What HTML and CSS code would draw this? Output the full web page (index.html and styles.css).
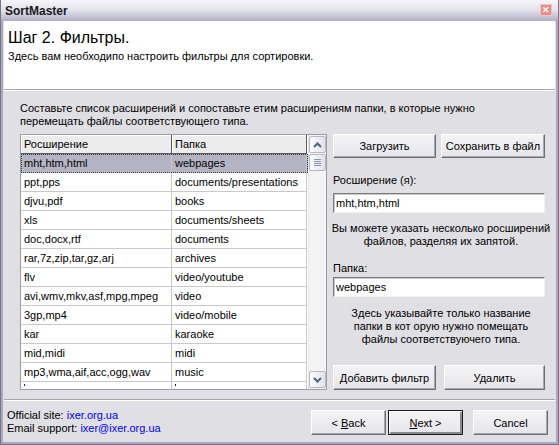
FILE: index.html
```html
<!DOCTYPE html>
<html lang="ru">

<head>
    <meta charset="UTF-8" />
    <title>SortMaster</title>
    <link rel="stylesheet" href="styles.css">
</head>

<body>
    <div class="window">
        <div class="titlebar">
            <span class="title">SortMaster</span>
            <span class="close">&#x2715;</span>
        </div>

        <div class="header">
            <h1>Шаг 2. Фильтры.</h1>
            <p>Здесь вам необходипо настроить фильтры для сортировки.</p>
        </div>

        <div class="content">
            <p class="hint">Составьте список расширений и сопоставьте етим расширениям папки, в которые нужно<br>перемещать файлы соответствующего типа.</p>

            <div class="main">
                <div class="list">
                    <div class="rows">
                        <div class="row head"><span>Росширение</span><span>Папка</span></div>
                        <div class="row selected"><span>mht,htm,html</span><span>webpages</span></div>
                        <div class="row"><span>ppt,pps</span><span>documents/presentations</span></div>
                        <div class="row"><span>djvu,pdf</span><span>books</span></div>
                        <div class="row"><span>xls</span><span>documents/sheets</span></div>
                        <div class="row"><span>doc,docx,rtf</span><span>documents</span></div>
                        <div class="row"><span>rar,7z,zip,tar,gz,arj</span><span>archives</span></div>
                        <div class="row"><span>flv</span><span>video/youtube</span></div>
                        <div class="row"><span>avi,wmv,mkv,asf,mpg,mpeg</span><span>video</span></div>
                        <div class="row"><span>3gp,mp4</span><span>video/mobile</span></div>
                        <div class="row"><span>kar</span><span>karaoke</span></div>
                        <div class="row"><span>mid,midi</span><span>midi</span></div>
                        <div class="row"><span>mp3,wma,aif,acc,ogg,wav</span><span>music</span></div>
                        <div class="row cut"><span></span><span></span></div>
                    </div>
                    <div class="scroll">
                        <div class="arrow">
                            <svg width="9" height="6" viewBox="0 0 9 6"><path d="M1 5 L4.5 1.5 L8 5" fill="none" stroke="#4d6185" stroke-width="2"/></svg>
                        </div>
                        <div class="thumb"><i></i><i></i><i></i><i></i></div>
                        <div class="track"></div>
                        <div class="arrow">
                            <svg width="9" height="6" viewBox="0 0 9 6"><path d="M1 1 L4.5 4.5 L8 1" fill="none" stroke="#4d6185" stroke-width="2"/></svg>
                        </div>
                    </div>
                </div>

                <div class="side">
                    <div class="btn-row">
                        <button class="btn">Загрузить</button>
                        <button class="btn wide">Сохранить в файл</button>
                    </div>

                    <label class="field-label">Росширение (я):</label>
                    <div class="field">mht,htm,html</div>
                    <p class="note">Вы можете указать несколько росширений<br>файлов, разделяя их запятой.</p>

                    <label class="field-label folder">Папка:</label>
                    <div class="field folder-field">webpages</div>
                    <p class="note folder-note">Здесь указывайте только название<br>папки в кот орую нужно помещать<br>файлы соответствуючего типа.</p>

                    <div class="btn-row bottom">
                        <button class="btn">Добавить фильтр</button>
                        <button class="btn">Удалить</button>
                    </div>
                </div>
            </div>
        </div>

        <div class="footer">
            <div class="links">
                <div>Official site: <a href="#">ixer.org.ua</a></div>
                <div>Email support: <a href="#">ixer@ixer.org.ua</a></div>
            </div>
            <div class="nav">
                <button class="btn">&lt; <u>B</u>ack</button>
                <button class="btn default"><u>N</u>ext &gt;</button>
                <button class="btn cancel">Cancel</button>
            </div>
        </div>
    </div>
</body>

</html>
```

FILE: styles.css
```css
* {
    margin: 0;
    padding: 0;
    box-sizing: border-box;
}

body {
    width: 559px;
    height: 445px;
    overflow: hidden;
    font-family: "Liberation Sans", Arial, sans-serif;
    font-size: 11px;
    color: #000;
}

.window {
    width: 559px;
    height: 445px;
    display: flex;
    flex-direction: column;
    background: #e0dfe3;
    border: 1px solid #76758f;
    border-top: none;
    box-shadow: inset 2px 0 #a9a8bf, inset -2px 0 #a9a8bf, inset 0 -2px #a9a8bf;
    padding: 0 3px 3px 3px;
}

.window > div {
    flex-shrink: 0;
}

.titlebar {
    height: 21px;
    margin: 0 -3px;
    display: flex;
    align-items: center;
    justify-content: space-between;
    padding: 0 6px 0 4px;
    background: linear-gradient(#f6f6f9, #e4e4ec 45%, #c5c4d6 80%, #aeadc3);
}

.title {
    font-weight: bold;
    font-size: 12px;
    color: #1a1a1a;
}

.close {
    width: 12px;
    height: 12px;
    margin-top: -1px;
    background: #e98e86;
    border: 1px solid #f2c4bd;
    color: #fff;
    font-size: 9px;
    font-weight: bold;
    line-height: 10px;
    text-align: center;
}

.header {
    height: 69px;
    background: #fff;
    border-bottom: 1px solid #a7a6aa;
    box-shadow: 0 1px #fff;
    padding: 7px 4px;
}

.header h1 {
    font-weight: normal;
    font-size: 16px;
    line-height: 19px;
}

.header p {
    margin-top: 3px;
    line-height: 13px;
}

.content {
    flex: 1;
    flex-shrink: 1;
    overflow: hidden;
    padding: 12px 0 0 16px;
    border-bottom: 1px solid #a7a6aa;
}

.hint {
    line-height: 13px;
}

.main {
    display: flex;
    gap: 6px;
    margin-top: 6px;
}

.list {
    width: 307px;
    height: 256px;
    display: flex;
    background: #fff;
    border: 1px solid #9c9ca6;
    overflow: hidden;
}

.rows {
    width: 287px;
    overflow: hidden;
}

.row {
    display: grid;
    grid-template-columns: 151px 135px;
    height: 19px;
}

.row span {
    padding: 0 3px;
    line-height: 18px;
    white-space: nowrap;
    overflow: hidden;
    border-right: 1px solid #c9c9c9;
    border-bottom: 1px solid #c9c9c9;
}

.row.head span {
    background: #ececec;
    border-right: 1px solid #5c5c5c;
    border-bottom: 1px solid #5c5c5c;
    box-shadow: inset 1px 1px #fff;
}

.row.selected {
    background: #b5b4c4;
    outline: 1px dotted #333;
    outline-offset: -1px;
}

.row.cut span::before {
    content: "";
    display: block;
    width: 1px;
    height: 2px;
    margin-top: 2px;
    background: #222;
}

.scroll {
    width: 18px;
    display: flex;
    flex-direction: column;
    background: #f4f4f6;
    border-left: 1px solid #e6e6ea;
    padding: 1px 0;
}

.arrow,
.thumb {
    height: 17px;
    display: flex;
    align-items: center;
    justify-content: center;
    background: linear-gradient(90deg, #fbfbfc, #e2e2ea);
    border: 1px solid #b8b7c8;
    border-radius: 2px;
}

.thumb {
    flex-direction: column;
    gap: 1px;
    margin-top: 1px;
}

.thumb i {
    display: block;
    width: 7px;
    height: 1px;
    background: #9291a8;
}

.track {
    flex: 1;
}

.side {
    width: 212px;
    display: flex;
    flex-direction: column;
}

.btn-row {
    display: flex;
    justify-content: space-between;
}

.btn {
    font-family: inherit;
    font-size: 11px;
    width: 103px;
    height: 24px;
    background: linear-gradient(#f4f4f6, #e6e5ea);
    border: 1px solid;
    border-color: #fff #6d6d72 #6d6d72 #fff;
    box-shadow: inset -1px -1px #a9a8b0;
    color: #000;
}

.btn.wide {
    width: 104px;
}

.field-label {
    display: block;
    margin-top: 16px;
    line-height: 13px;
}

.field-label.folder {
    margin-top: 14px;
}

.field {
    margin-top: 6px;
    height: 20px;
    line-height: 18px;
    padding: 0 2px;
    background: #fff;
    border: 1px solid;
    border-color: #7a7a80 #f0f0f2 #f0f0f2 #7a7a80;
    box-shadow: inset 1px 1px #c8c8cc;
}

.field.folder-field {
    margin-top: 2px;
}

.note {
    margin: 9px -8px 0 -4px;
    text-align: center;
    line-height: 13px;
    white-space: nowrap;
}

.note.folder-note {
    margin-top: 10px;
}

.btn-row.bottom {
    margin-top: 19px;
}

.btn-row.bottom .btn {
    height: 25px;
}

.btn-row.bottom .btn:last-child {
    width: 101px;
}

.footer {
    height: 41px;
    display: flex;
    justify-content: space-between;
    padding: 8px 7px 0 3px;
    border-top: 1px solid #fff;
}

.links {
    line-height: 13px;
}

.links a {
    color: #0000ff;
    text-decoration: none;
}

.nav {
    display: flex;
    padding-top: 1px;
}

.nav .btn {
    width: 75px;
    height: 25px;
    margin-left: 2px;
}

.nav .btn.default {
    border: 1px solid #1c1c1c;
    box-shadow: inset 1px 1px #fff, inset -2px -2px #8a8990;
}

.nav .btn.cancel {
    margin-left: 10px;
}
```
